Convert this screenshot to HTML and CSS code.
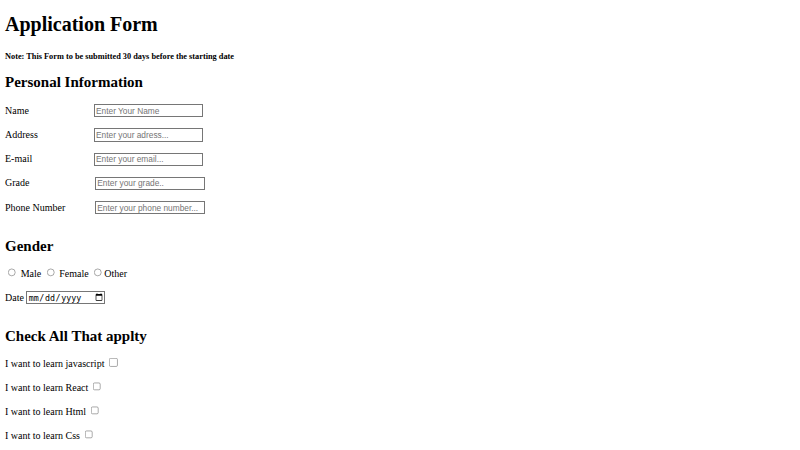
FILE: index.html
```html
<!DOCTYPE html>
<html>
<head>
<meta charset="utf-8">
<link rel="stylesheet" href="styles.css">
</head>
<body>
<div class="page">
  <h1>Application Form</h1>
  <h5 class="note">Note: This Form to be submitted 30 days before the starting date</h5>
  <h2 class="first">Personal Information</h2>
  <p class="row"><label class="lbl">Name</label><input class="field" type="text" placeholder="Enter Your Name"></p>
  <p class="row"><label class="lbl">Address</label><input class="field" type="text" placeholder="Enter your adress..."></p>
  <p class="row"><label class="lbl">E-mail</label><input class="field" type="text" placeholder="Enter your email..."></p>
  <p class="row"><label class="lbl lbl-wide">Grade</label><input class="field" type="text" placeholder="Enter your grade.."></p>
  <p class="row"><label class="lbl lbl-wide">Phone Number</label><input class="field" type="text" placeholder="Enter your phone number..."></p>
  <h2 class="section">Gender</h2>
  <p class="radios"><input type="radio" name="g"> Male <input type="radio" name="g"> Female <input type="radio" name="g">Other</p>
  <p>Date <input class="date" type="date"></p>
  <h2 class="section">Check All That applty</h2>
  <p>I want to learn javascript <input type="checkbox"></p>
  <p>I want to learn React <input type="checkbox"></p>
  <p>I want to learn Html <input type="checkbox"></p>
  <p>I want to learn Css <input type="checkbox"></p>
</div>
</body>
</html>
```
FILE: styles.css
```css
html, body {
  margin: 0;
  padding: 0;
  background: #ffffff;
}
.page {
  zoom: 0.625;
  padding: 0 8px 8px;
  font-family: "Liberation Serif", "Times New Roman", serif;
  font-size: 16px;
  color: #000;
}
.page p {
  line-height: 1.4;
  margin: 16px 0;
}
.page p.row {
  margin: 16.4px 0;
}
.note {
  margin-top: 25.4px;
  margin-bottom: 20.5px;
}
.page h2 {
  margin-bottom: 18.5px;
}
.page h2.first {
  margin-bottom: 20.1px;
}
.page h2.section {
  margin-top: 37.4px;
}
.lbl {
  display: inline-block;
  width: 142px;
}
.lbl-wide {
  width: 144px;
}
.field {
  font-family: "Liberation Sans", Arial, sans-serif;
  width: 168px;
}
.date {
  width: 122px;
}
```
